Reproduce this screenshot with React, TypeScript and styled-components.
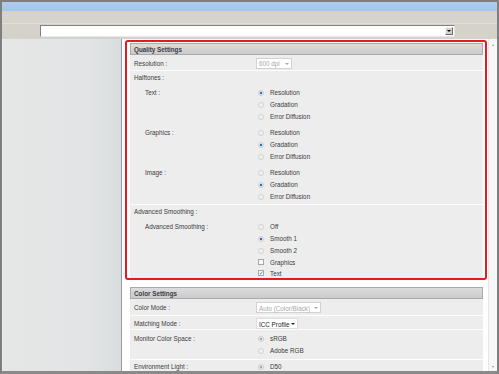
import React from 'react';
import styled, {createGlobalStyle} from 'styled-components';

const GlobalStyle = createGlobalStyle`
  html, body {
    margin: 0;
    padding: 0;
    background: #fff;
  }
  body {
    font-family: "Liberation Sans", Arial, sans-serif;
  }
`;

type Opt = {label: string; checked?: boolean; kind?: 'radio' | 'check'; dim?: boolean};

const halftones: {name: string; options: Opt[]}[] = [
  {name: 'Text :', options: [{label: 'Resolution', checked: true}, {label: 'Gradation'}, {label: 'Error Diffusion'}]},
  {name: 'Graphics :', options: [{label: 'Resolution'}, {label: 'Gradation', checked: true}, {label: 'Error Diffusion'}]},
  {name: 'Image :', options: [{label: 'Resolution'}, {label: 'Gradation', checked: true}, {label: 'Error Diffusion'}]},
];

const smoothing: Opt[] = [
  {label: 'Off'},
  {label: 'Smooth 1', checked: true},
  {label: 'Smooth 2'},
  {label: 'Graphics', kind: 'check'},
  {label: 'Text', kind: 'check', checked: true},
];

const OptionList: React.FC<{options: Opt[]}> = ({options}) => (
  <Options>
    {options.map((o, i) => (
      <Option key={i} $kind={o.kind || 'radio'}>
        {o.kind === 'check'
          ? <Check $checked={!!o.checked}>{o.checked ? '✓' : ''}</Check>
          : <Radio $checked={!!o.checked} $dim={!!o.dim}/>}
        <OptLabel>{o.label}</OptLabel>
      </Option>
    ))}
  </Options>
);

const App: React.FC = () => (
  <>
    <GlobalStyle/>
    <Window>
      <TitleBar/>
      <Toolbar/>
      <AddressRow>
        <AddressBox>
          <DropButton><Caret/></DropButton>
        </AddressBox>
      </AddressRow>
      <Body>
        <Sidebar/>
        <Main>
          <Highlight>
            <Section>
              <SectionHeader>Quality Settings</SectionHeader>
              <Row $h={16}>
                <Label>Resolution :</Label>
                <Value><Select $disabled $w={36}>600 dpi</Select></Value>
              </Row>
              <Block>
                <BlockTitle>Halftones :</BlockTitle>
                {halftones.map((g) => (
                  <SubRow key={g.name}>
                    <SubLabel>{g.name}</SubLabel>
                    <OptionList options={g.options}/>
                  </SubRow>
                ))}
              </Block>
              <Block $last>
                <BlockTitle>Advanced Smoothing :</BlockTitle>
                <SubRow>
                  <SubLabel>Advanced Smoothing :</SubLabel>
                  <OptionList options={smoothing}/>
                </SubRow>
              </Block>
            </Section>
          </Highlight>
          <ColorSection>
            <SectionHeader>Color Settings</SectionHeader>
            <Row $h={17}>
              <Label>Color Mode :</Label>
              <Value><Select $disabled $w={65}>Auto (Color/Black)</Select></Value>
            </Row>
            <Row $h={14}>
              <Label>Matching Mode :</Label>
              <Value><Select $w={42}>ICC Profile</Select></Value>
            </Row>
            <Row $h={30} $top={2}>
              <Label>Monitor Color Space :</Label>
              <OptionList options={[{label: 'sRGB', checked: true, dim: true}, {label: 'Adobe RGB'}]}/>
            </Row>
            <Row $h={14} $top={0}>
              <Label>Environment Light :</Label>
              <OptionList options={[{label: 'D50', checked: true, dim: true}]}/>
            </Row>
          </ColorSection>
        </Main>
        <Scrollbar>
          <Arrow $up/>
          <Arrow/>
        </Scrollbar>
      </Body>
    </Window>
  </>
);

export default App;

const Window = styled.div`
  width: 499px;
  height: 374px;
  box-sizing: border-box;
  border: 2px solid #7e7e7e;
  border-bottom-width: 3px;
  border-bottom-color: #8a8a8a;
  display: flex;
  flex-direction: column;
  overflow: hidden;
  background: #d5d2cb;
`;

const TitleBar = styled.div`
  height: 9px;
  background: linear-gradient(#b0cdf0, #a3c4ec);
`;

const Toolbar = styled.div`
  height: 12px;
  background: #d6d3cc;
`;

const AddressRow = styled.div`
  height: 16px;
  box-sizing: border-box;
  border-top: 1px solid #e3e0da;
  padding: 1px 0 0 38px;
  background: #d5d2cb;
`;

const AddressBox = styled.div`
  width: 415px;
  height: 12px;
  box-sizing: border-box;
  background: #fff;
  border: 1px solid;
  border-color: #808080 #e8e8e8 #e8e8e8 #808080;
  display: flex;
  justify-content: flex-end;
  padding: 1px;
`;

const DropButton = styled.div`
  width: 8px;
  height: 8px;
  background: #d4d0c8;
  border: 1px solid;
  border-color: #f4f4f4 #6a6a6a #6a6a6a #f4f4f4;
  box-sizing: border-box;
  display: flex;
  align-items: center;
  justify-content: center;
`;

const Caret = styled.span`
  width: 0;
  height: 0;
  border-left: 2px solid transparent;
  border-right: 2px solid transparent;
  border-top: 2px solid #000;
`;

const Body = styled.div`
  flex: 1;
  display: flex;
  min-height: 0;
`;

const Sidebar = styled.div`
  width: 120px;
  box-sizing: border-box;
  border-left: 1px solid #eef0f0;
  border-right: 1px solid #9c9c9c;
  background: linear-gradient(90deg, #e5e7e7, #e2e4e5 70%, #dadddf);
`;

const Main = styled.div`
  flex: 1;
  background: #fff;
  padding: 1px 1px 0 3px;
  overflow: hidden;
`;

const Highlight = styled.div`
  border: 2px solid #e31b1f;
  border-radius: 3px;
  padding: 1px 2px 0 3px;
  background: #fff;
`;

const Section = styled.div`
  background: #ededed;
  color: #3b3b3b;
  font-size: 6.3px;
`;

const ColorSection = styled(Section)`
  margin: 7px 4px 0 5px;
`;

const SectionHeader = styled.div`
  height: 12px;
  box-sizing: border-box;
  border: 1px solid #a9a9a9;
  background: linear-gradient(#dcdcdc, #cbcbcb);
  font-weight: bold;
  color: #3a3a4a;
  padding: 1px 0 0 3px;
  display: flex;
  align-items: center;
`;

// $top: rows whose options stack from the top, with that much top padding
const Row = styled.div<{$h: number; $top?: number}>`
  height: ${({$h}) => $h}px;
  display: grid;
  grid-template-columns: 122px 1fr;
  align-items: ${({$top}) => ($top !== undefined ? 'start' : 'center')};
  padding: ${({$top}) => ($top !== undefined ? $top : 1)}px 0 0 4px;
  border-bottom: 1px solid #fdfdfd;
  box-sizing: border-box;
`;

const Label = styled.div`
  line-height: 12px;
  padding-top: 1px;
  white-space: nowrap;
`;

const Value = styled.div`
  display: flex;
  align-items: center;
`;

const Select = styled.div<{$disabled?: boolean; $w: number}>`
  width: ${({$w}) => $w}px;
  height: 11px;
  box-sizing: border-box;
  border: 1px solid ${({$disabled}) => ($disabled ? '#d2d2d2' : '#dcdcdc')};
  background: #fff;
  color: ${({$disabled}) => ($disabled ? '#a8a8a8' : '#222')};
  padding: 1px 2px 0;
  display: flex;
  align-items: center;
  justify-content: space-between;
  white-space: nowrap;

  &::after {
    content: '';
    border-left: 2px solid transparent;
    border-right: 2px solid transparent;
    border-top: 2px solid ${({$disabled}) => ($disabled ? '#a8a8a8' : '#222')};
  }
`;

const Block = styled.div<{$last?: boolean}>`
  padding: 0 0 ${({$last}) => ($last ? '0' : '2px')} 4px;
  border-bottom: ${({$last}) => ($last ? 'none' : '1px solid #fdfdfd')};
  display: flex;
  flex-direction: column;
  gap: 4px;
`;

const BlockTitle = styled.div`
  line-height: 12px;
  padding-top: 1px;
  margin-bottom: -2px;
`;

const SubRow = styled.div`
  display: grid;
  grid-template-columns: 111px 1fr;
  padding-left: 11px;
`;

const SubLabel = styled.div`
  line-height: 12px;
  padding-top: 1px;
  white-space: nowrap;
`;

const Options = styled.div`
  display: flex;
  flex-direction: column;
`;

const Option = styled.div<{$kind: 'radio' | 'check'}>`
  height: ${({$kind}) => ($kind === 'check' ? 11 : 12)}px;
  box-sizing: border-box;
  display: flex;
  align-items: center;
  padding: 1px 0 0 2px;
`;

const Radio = styled.span<{$checked: boolean; $dim: boolean}>`
  width: 6px;
  height: 6px;
  box-sizing: border-box;
  border-radius: 50%;
  border: 1px solid #cfcfcf;
  background: ${({$checked, $dim}) =>
    $checked
      ? `radial-gradient(circle, ${$dim ? '#a9a9a9' : '#2f6fae'} 0 1.3px, #e4e9ee 1.6px)`
      : '#f3f3f3'};
`;

const Check = styled.span<{$checked: boolean}>`
  width: 6px;
  height: 6px;
  box-sizing: border-box;
  border: 1px solid #a8a8a8;
  background: #f8f8f8;
  color: #2a4f8a;
  font-size: 5.5px;
  line-height: 4px;
  text-align: center;
  font-family: "DejaVu Sans", sans-serif;
`;

const OptLabel = styled.span`
  margin-left: 6px;
  white-space: nowrap;
`;

const Scrollbar = styled.div`
  width: 9px;
  box-sizing: border-box;
  border-left: 1px solid #e6e6e6;
  background: #f7f7f7;
  display: flex;
  flex-direction: column;
  justify-content: space-between;
  align-items: center;
  padding: 5px 0 3px;
`;

const Arrow = styled.span<{$up?: boolean}>`
  width: 0;
  height: 0;
  border-left: 1.5px solid transparent;
  border-right: 1.5px solid transparent;
  ${({$up}) => ($up ? 'border-bottom: 2px solid #9a9a9a;' : 'border-top: 2px solid #9a9a9a;')}
`;
